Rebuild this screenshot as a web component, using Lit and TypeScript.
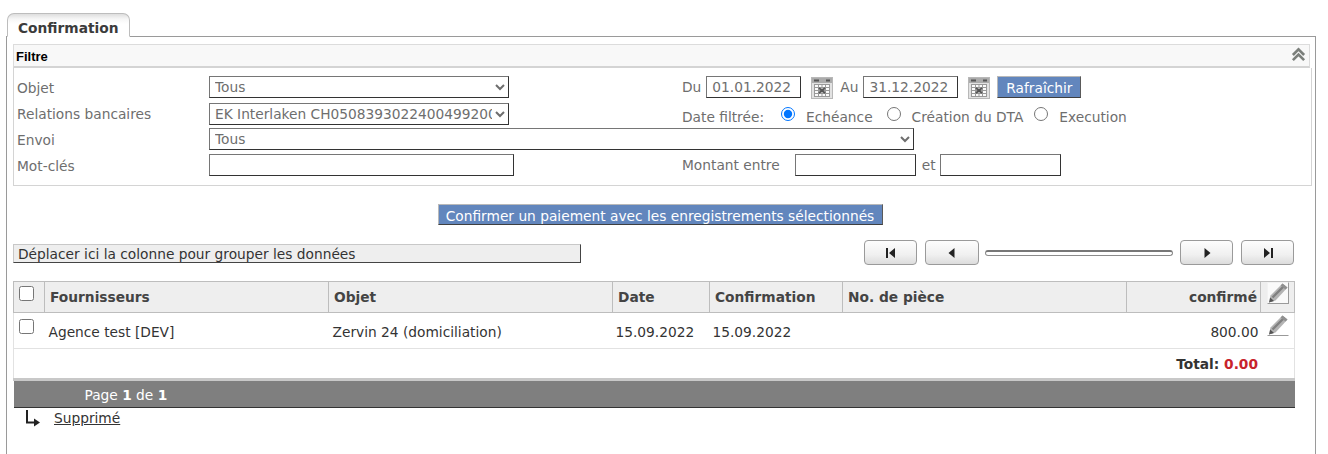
import { LitElement, html, css, svg } from "lit";
import { customElement } from "lit/decorators.js";

const calendar = html`<svg class="cal" width="23" height="24" viewBox="0 0 23 24" aria-hidden="true">
  <rect x="0.5" y="1.5" width="21" height="21" fill="#e2e2e2" stroke="#b8b8b8"/>
  <rect x="1" y="2" width="20" height="5" fill="#ababab"/>
  <path d="M3 4.5h5M15 4.5h4" stroke="#555" stroke-width="2"/>
  <rect x="3.5" y="8.5" width="15" height="12" fill="#fafafa" stroke="#999"/>
  <path d="M3.5 11.5h15M3.5 14.5h15M3.5 17.5h15M7.5 8.5v12M11 8.5v12M14.5 8.5v12" stroke="#999" stroke-width="1" fill="none"/>
  <path d="M8 12l6 5M14 12l-6 5" stroke="#555" stroke-width="2"/>
</svg>`;

const pencil = html`<svg class="pen" width="20" height="20" viewBox="0 0 20 20" aria-hidden="true">
  <path d="M14.5 0.5 L19.5 4.5 L7.5 17.5 L1 19.5 L2.5 12.5 Z" fill="#b4b4b4"/>
  <path d="M4.5 14.5 L16.5 2.5" stroke="#808080" stroke-width="2.4"/>
  <path d="M14.5 0.5 L19.5 4.5 L17.5 6.6 L12.6 2.6 Z" fill="#909090"/>
  <path d="M1 19.5 L2.2 14.5 L6 18 Z" fill="#555"/>
</svg>`;

const navIcon = (d: string) => html`<svg width="14" height="14" viewBox="0 0 14 14" aria-hidden="true">${svg`<path d="${d}" fill="#222"/>`}</svg>`;

@customElement("app-root")
export class AppRoot extends LitElement {
  static styles = css`
    :host { display: block; width: 1328px; height: 454px; overflow: hidden; background: #fff;
      font-family: "DejaVu Sans", Verdana, sans-serif; font-size: 13.75px; color: #6e6e6e; box-sizing: border-box; padding: 13px 13px 0 6px; }
    * { box-sizing: border-box; }
    .tab { width: 123px; height: 24px; margin-left: 1px; margin-bottom: -1px; position: relative; z-index: 1;
      border: 1px solid #bdbdbd; border-bottom: 1px solid #fff; border-radius: 7px 7px 0 0;
      background: linear-gradient(#dedede 0, #f6f6f6 5px, #fff 10px);
      font-weight: 700; font-size: 13.75px; color: #3b3b3b; padding: 5px 0 0 10px; line-height: 18px; }
    .panel { width: 1310px; height: 420px; border: 1px solid #9a9a9a; border-bottom: 0; padding: 7px 3px 0 6px; }
    .head { height: 24px; border: 1px solid #dcdcdc; border-bottom: 2px solid #d4d4d4; background: #f8f8f8; width: 1297px;
      display: flex; align-items: center; justify-content: space-between; padding: 2px 3px 0 2px; }
    .head b { font-family: "Liberation Sans", Arial, sans-serif; font-size: 13px; font-weight: 700; color: #000; }
    .collapse { display: block; margin-top: -4px; }
    .filter { width: 1299px; height: 118px; border: 1px solid #d4d4d4; border-top: 0; padding: 8px 0 0 3px;
      display: grid; grid-template-columns: 192px 473px 1fr; grid-template-rows: 22px 22px 22px 22px; row-gap: 4px; align-items: center; line-height: 22px; }
    .lbl { padding-top: 2px; }
    .low { margin-top: 2px; }
    select { height: 22px; font: 13.75px "DejaVu Sans", Verdana, sans-serif; color: #6e6e6e; background: #fff;
      border: 1px solid #767676; border-bottom-color: #333; border-right-color: #333; border-radius: 0; padding: 0 0 0 1px; outline: 0; }
    input[type="text"] { height: 22px; font: 13.75px "DejaVu Sans", Verdana, sans-serif; color: #6e6e6e; background: #fff;
      border: 1px solid #767676; border-right-color: #333; border-bottom-color: #333; padding: 0 4px 0 5px; border-radius: 0; }
    .w300 { width: 300px; }
    .wide { width: 705px; grid-column: 2 / 4; }
    .kw { width: 305px; }
    .rowline { display: flex; align-items: center; }
    .du { width: 95px; margin-left: 5px; }
    .au { width: 95px; margin-left: 5px; }
    .cal { margin-left: 10px; margin-top: 2px; }
    .aul { margin-left: 6px; }
    .btn { background: #6286bd; color: #fff; font: 13.75px "DejaVu Sans", Verdana, sans-serif; border: 1px solid #6286bd;
      border-top-color: #b9b9b9; border-left-color: #b9b9b9; border-right-color: #5a5a5a; border-bottom-color: #3f3f3f; padding: 2px 0 0; height: 22px; line-height: 19px; }
    .refresh { margin-left: 6px; width: 84px; margin-top: -1px; }
    .dateline { margin-top: 8px; }
    input[type="radio"] { width: 14px; height: 14px; accent-color: #0075ff; position: relative; top: -3px; }
    input.r1 { margin: 0 11px 0 17px; }
    input.r2 { margin: 0 11px 0 14px; }
    input.r3 { margin: 0 11px 0 11px; }
    .m1 { width: 121px; margin-left: 15px; }
    .m2 { width: 121px; margin-left: 4px; }
    .et { margin-left: 6px; }
    .action { display: flex; justify-content: center; padding-top: 18px; width: 1297px; }
    .action .btn { height: 21px; width: 445px; margin-left: -3px; white-space: nowrap; }
    .bar { display: flex; align-items: center; justify-content: space-between; margin-top: 15px; height: 25px; width: 1281px; }
    .drop { width: 568px; height: 19px; background: #eee; border: 1px solid #c8c8c8; border-right-color: #444; border-bottom-color: #444;
      color: #333; line-height: 18px; padding-left: 4px; margin-top: 2px; }
    .pager { display: flex; align-items: center; }
    .pg { width: 53px; height: 25px; border: 1px solid #9a9a9a; border-radius: 4px; background: linear-gradient(#fdfdfd, #f0f0f0 60%, #dcdcdc);
      display: flex; align-items: center; justify-content: center; }
    .pg.w54 { width: 54px; }
    .g8 { margin-right: 8px; }
    .g6 { margin-right: 6px; }
    .slider { width: 188px; height: 6px; border: 1px solid #8b8b8b; border-top: 2px solid #777; border-radius: 3px; background: #fff; margin-right: 7px; }
    table { margin-top: 16px; width: 1281px; border-collapse: collapse; table-layout: fixed; color: #333; }
    th { height: 31px; background: #eee; border: 1px solid #bdbdbd; font-size: 13.75px; font-weight: 700; color: #444; text-align: left; padding: 0 0 0 5px; }
    td { border: 0; padding: 0 0 0 4px; }
    .row td { height: 36px; border-bottom: 1px solid #e2e2e2; padding-top: 2px; }
    .row td.d { padding-left: 3px; }
    .row td.edge-l { border-left: 1px solid #e2e2e2; }
    .row td.edge-r { border-right: 1px solid #e2e2e2; }
    .total td { height: 31px; border-bottom: 3px solid #c8c8c8; text-align: right; font-weight: 700; padding: 0 36px 0 0; color: #333; border-left: 1px solid #e2e2e2; border-right: 1px solid #e2e2e2; }
    .total em { font-style: normal; color: #c8232c; }
    .foot td { height: 28px; background: #7f7f7f; color: #fff; padding: 2px 0 0 71px; border-bottom: 1px solid #333; }
    th.num { text-align: right; padding-right: 3px; }
    td.num { text-align: right; padding-right: 2px; }
    input[type="checkbox"] { width: 15px; height: 15px; display: block; }
    th input[type="checkbox"] { margin: 0 0 7px; }
    td input[type="checkbox"] { margin: 0 0 10px; }
    td.chk { padding-left: 5px; }
    th.ed, td.ed { padding: 0 0 0 6px; }
    .penbtn { width: 22px; height: 22px; border: 1px solid; border-color: #f2f2f2 #9a9a9a #9a9a9a #f2f2f2; display: flex; align-items: center; justify-content: center; background: #fafafa; margin-bottom: 8px; }
    td .penbtn { border-color: #fff #fff #999 #fff; background: #fff; margin-bottom: 11px; }
    .pen { flex: none; }
    .link { display: flex; align-items: center; padding: 0 0 0 11px; color: #333; height: 20px; }
    .link svg { margin-right: 12px; margin-top: 1px; }
    .link a { color: #333; text-decoration: underline; }
  `;

  render() {
    return html`
      <div class="tab">Confirmation</div>
      <div class="panel">
        <div class="head"><b>Filtre</b>
          <svg class="collapse" width="15" height="15" viewBox="0 0 16 16" aria-hidden="true">
            <path d="M2 8.5 L8 2.5 L14 8.5 M2 14 L8 8 L14 14" fill="none" stroke="#7b7f7b" stroke-width="2.8"/>
          </svg>
        </div>
        <div class="filter">
          <span class="lbl">Objet</span>
          <select class="w300"><option>Tous</option></select>
          <div class="rowline"><span>Du</span><input type="text" class="du" value="01.01.2022" />${calendar}<span class="aul">Au</span><input type="text" class="au" value="31.12.2022" />${calendar}<button class="btn refresh">Rafraîchir</button></div>

          <span class="lbl">Relations bancaires</span>
          <select class="w300 low"><option>EK Interlaken CH0508393022400499200</option></select>
          <div class="rowline dateline"><span>Date filtrée:</span><input type="radio" class="r1" name="d" checked /><span>Echéance</span><input type="radio" class="r2" name="d" /><span>Création du DTA</span><input type="radio" class="r3" name="d" /><span>Execution</span></div>

          <span class="lbl">Envoi</span>
          <select class="wide"><option>Tous</option></select>

          <span class="lbl">Mot-clés</span>
          <input type="text" class="kw" />
          <div class="rowline"><span>Montant entre</span><input type="text" class="m1" /><span class="et">et</span><input type="text" class="m2" /></div>
        </div>

        <div class="action"><button class="btn">Confirmer un paiement avec les enregistrements sélectionnés</button></div>

        <div class="bar">
          <div class="drop">Déplacer ici la colonne pour grouper les données</div>
          <div class="pager">
            <div class="pg g8">${navIcon("M2 2h2v10H2zM11 2v10L5 7z")}</div>
            <div class="pg w54 g6">${navIcon("M9.5 2v10L3.5 7z")}</div>
            <div class="slider"></div>
            <div class="pg g8">${navIcon("M4.5 2v10L10.5 7z")}</div>
            <div class="pg">${navIcon("M3 2v10l6-5zM10 2h2v10h-2z")}</div>
          </div>
        </div>

        <table>
          <colgroup>
            <col style="width:31px" /><col style="width:284px" /><col style="width:284px" /><col style="width:97px" />
            <col style="width:133px" /><col style="width:284px" /><col style="width:134px" /><col style="width:34px" />
          </colgroup>
          <thead>
            <tr>
              <th class="chk"><input type="checkbox" /></th>
              <th>Fournisseurs</th><th>Objet</th><th>Date</th><th>Confirmation</th><th>No. de pièce</th>
              <th class="num">confirmé</th>
              <th class="ed"><div class="penbtn">${pencil}</div></th>
            </tr>
          </thead>
          <tbody>
            <tr class="row">
              <td class="chk edge-l"><input type="checkbox" /></td>
              <td>Agence test [DEV]</td><td>Zervin 24 (domiciliation)</td><td class="d">15.09.2022</td><td class="d">15.09.2022</td><td></td>
              <td class="num">800.00</td>
              <td class="ed edge-r"><div class="penbtn">${pencil}</div></td>
            </tr>
            <tr class="total"><td colspan="8">Total: <em>0.00</em></td></tr>
            <tr class="foot"><td colspan="8">Page <b>1</b> de <b>1</b></td></tr>
          </tbody>
        </table>
        <div class="link">
          <svg width="18" height="17" viewBox="0 0 18 17" aria-hidden="true"><path d="M3 0v12.5H10" fill="none" stroke="#222" stroke-width="2"/><path d="M10 8.5l6 4-6 4z" fill="#222"/></svg>
          <a href="#">Supprimé</a>
        </div>
      </div>
    `;
  }
}
